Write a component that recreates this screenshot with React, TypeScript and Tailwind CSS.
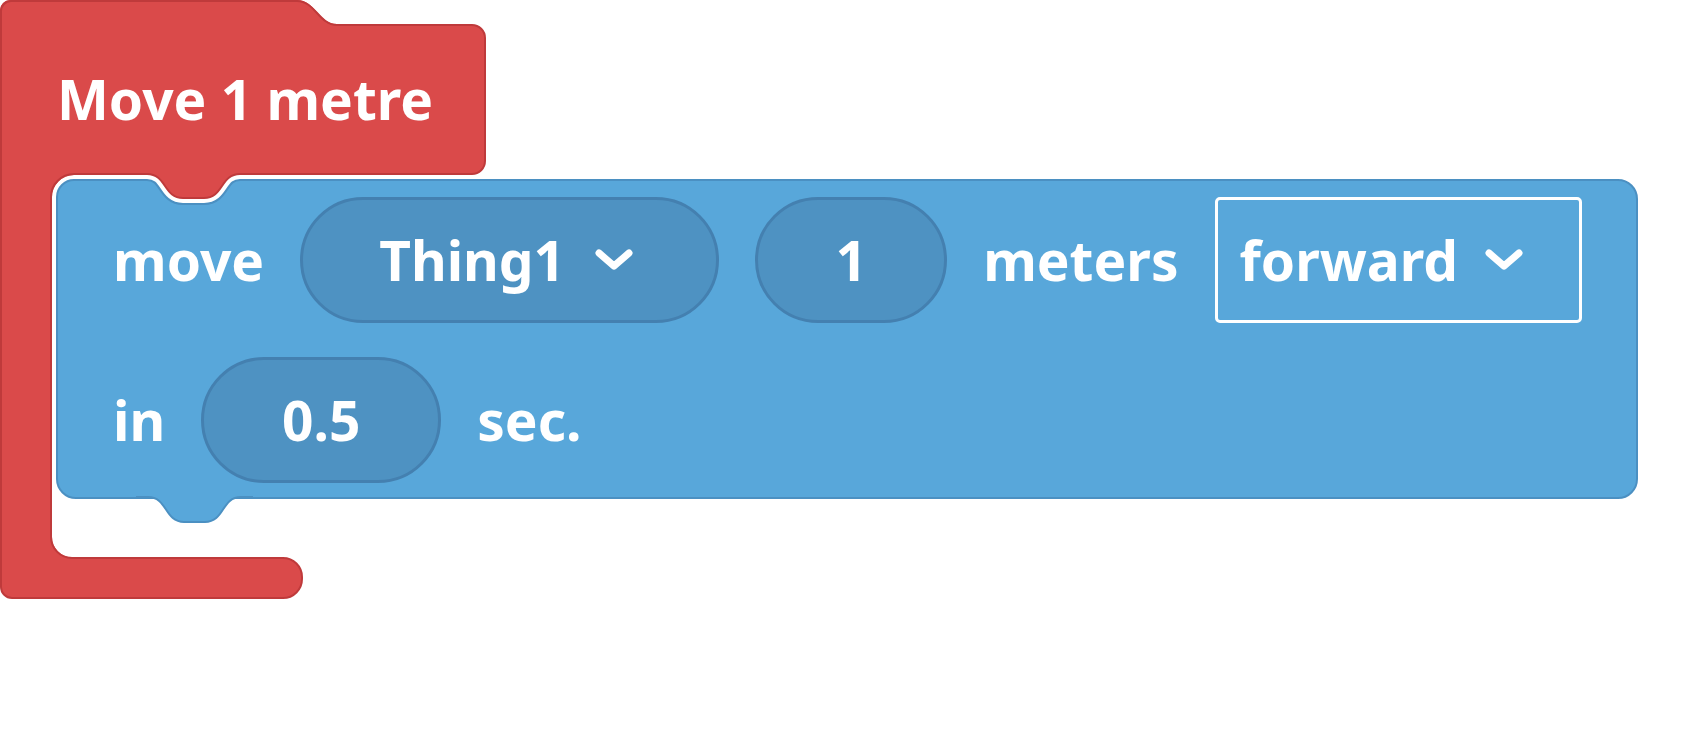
import React from "react";

// block colours
const RED = "#da4a4a";
const RED_DARK = "#bf3a3b";
const BLUE = "#58a7da";
const BLUE_DARK = "#4b90c2";

// connection notch, drawn along its centre line: slope L, flat F, depth d
function notch(x0: number, y0: number, d: number, L = 36, F = 21) {
  const a = x0 + L;
  const b = a + F;
  const e = b + L;
  return `M${x0 - 12},${y0} L${x0},${y0} C${x0 + L * 0.55},${y0} ${x0 + L * 0.45},${y0 + d} ${a},${y0 + d} L${b},${y0 + d} C${b + L * 0.55},${y0 + d} ${b + L * 0.45},${y0} ${e},${y0} L${e + 12},${y0}`;
}

function Chevron() {
  return (
    <svg width="40" height="26" viewBox="0 0 40 26" className="shrink-0">
      <polyline
        points="5,6 20,19 35,6"
        fill="none"
        stroke="white"
        strokeWidth="7"
        strokeLinecap="round"
        strokeLinejoin="round"
      />
    </svg>
  );
}

function Pill({ width, children }: { width: string; children: React.ReactNode }) {
  return (
    <div
      className={`flex h-[126px] shrink-0 items-center justify-center rounded-full border-[3px] border-[#4480b0] bg-[#4e92c2] ${width}`}
    >
      {children}
    </div>
  );
}

function MoveBlock() {
  return (
    <div className="flex h-[320px] w-[1582px] flex-col gap-[34px] rounded-[20px] rounded-tl-[18px] border-2 border-[#4b90c2] bg-[#58a7da] pl-[55px] pt-[16px]">
      <div className="flex h-[126px] items-center gap-[36px]">
        <span>move</span>
        <div className="flex h-[126px] w-[419px] shrink-0 items-center gap-[29px] rounded-full border-[3px] border-[#4480b0] bg-[#4e92c2] pl-[76px]">
          <span>Thing1</span>
          <Chevron />
        </div>
        <Pill width="w-[192px]">1</Pill>
        <span>meters</span>
        <div className="flex h-[126px] w-[367px] shrink-0 items-center gap-[26px] rounded-[5px] border-[3px] border-white pl-[22px]">
          <span>forward</span>
          <Chevron />
        </div>
      </div>
      <div className="flex h-[126px] items-center gap-[36px]">
        <span>in</span>
        <Pill width="w-[240px]">0.5</Pill>
        <span>sec.</span>
      </div>
    </div>
  );
}

export default function App() {
  return (
    <div className="h-[736px] w-full overflow-hidden bg-white font-['Noto_Sans'] font-bold text-[55px] text-white">
      <div className="relative flex w-max flex-col items-start pt-[24px]">
        {/* header */}
        <div className="flex h-[151px] w-[486px] items-center rounded-br-[14px] rounded-tr-[14px] border-2 border-[#bf3a3b] bg-[#da4a4a] pl-[55px]">
          Move 1 metre
        </div>

        {/* arm + inner statement */}
        <div className="flex">
          <div className="relative z-10 -my-[2px] w-[52px] border-x-2 border-[#bf3a3b] bg-[#da4a4a]" />
          <div className="mb-[58px] ml-[4px] mt-[4px]">
            <MoveBlock />
          </div>
        </div>

        {/* bottom arm */}
        <div className="h-[42px] w-[303px] rounded-bl-[12px] rounded-br-[20px] rounded-tr-[20px] border-2 border-[#bf3a3b] bg-[#da4a4a]" />

        {/* top step of the red block */}
        <svg className="absolute left-0 top-0 z-20" width="342" height="30" viewBox="0 0 342 30">
          <path d="M0,29 L0,10 A10,10 0 0 1 10,0 L297,0 C315,0 319,24 337,24 L342,24 L342,29 Z" fill={RED} />
          <path d="M1,29 L1,11 A10,10 0 0 1 11,1 L297,1 C315,1 319,25 337,25 L342,25" fill="none" stroke={RED_DARK} strokeWidth="2" />
        </svg>

        {/* inner rounded corners of the red block */}
        <svg className="absolute left-[50px] top-[173px] z-20" width="24" height="24" viewBox="0 0 24 24">
          <path d="M0,0 H24 V2 A22,22 0 0 0 2,24 H0 Z" fill={RED} />
          <path d="M24,1 A23,23 0 0 0 1,24" fill="none" stroke={RED_DARK} strokeWidth="2" />
        </svg>
        <svg className="absolute left-[50px] top-[537px] z-20" width="22" height="22" viewBox="0 0 22 22">
          <path d="M0,0 H2 A20,20 0 0 0 22,20 V22 H0 Z" fill={RED} />
          <path d="M1,0 A21,21 0 0 0 22,21" fill="none" stroke={RED_DARK} strokeWidth="2" />
        </svg>

        {/* red tab sitting in the blue block's notch */}
        <svg className="absolute left-[130px] top-[160px] z-20" width="130" height="60" viewBox="130 160 130 60">
          <path d={notch(147, 174, 24)} fill="none" stroke={BLUE_DARK} strokeWidth="14" />
          <path d={notch(147, 174, 24)} fill="none" stroke="white" strokeWidth="10" />
          <path d={`${notch(147, 174, 24)} L252,165 L135,165 Z`} fill={RED} />
          <path d={notch(147, 174, 24)} fill="none" stroke={RED_DARK} strokeWidth="2" />
        </svg>

        {/* blue block's bottom tab */}
        <svg className="absolute left-[130px] top-[485px] z-20" width="130" height="45" viewBox="130 485 130 45">
          <path d={`${notch(148, 497, 25)} L253,488 L136,488 Z`} fill={BLUE} />
          <path d={notch(148, 497, 25)} fill="none" stroke={BLUE_DARK} strokeWidth="2" />
        </svg>
      </div>
    </div>
  );
}
